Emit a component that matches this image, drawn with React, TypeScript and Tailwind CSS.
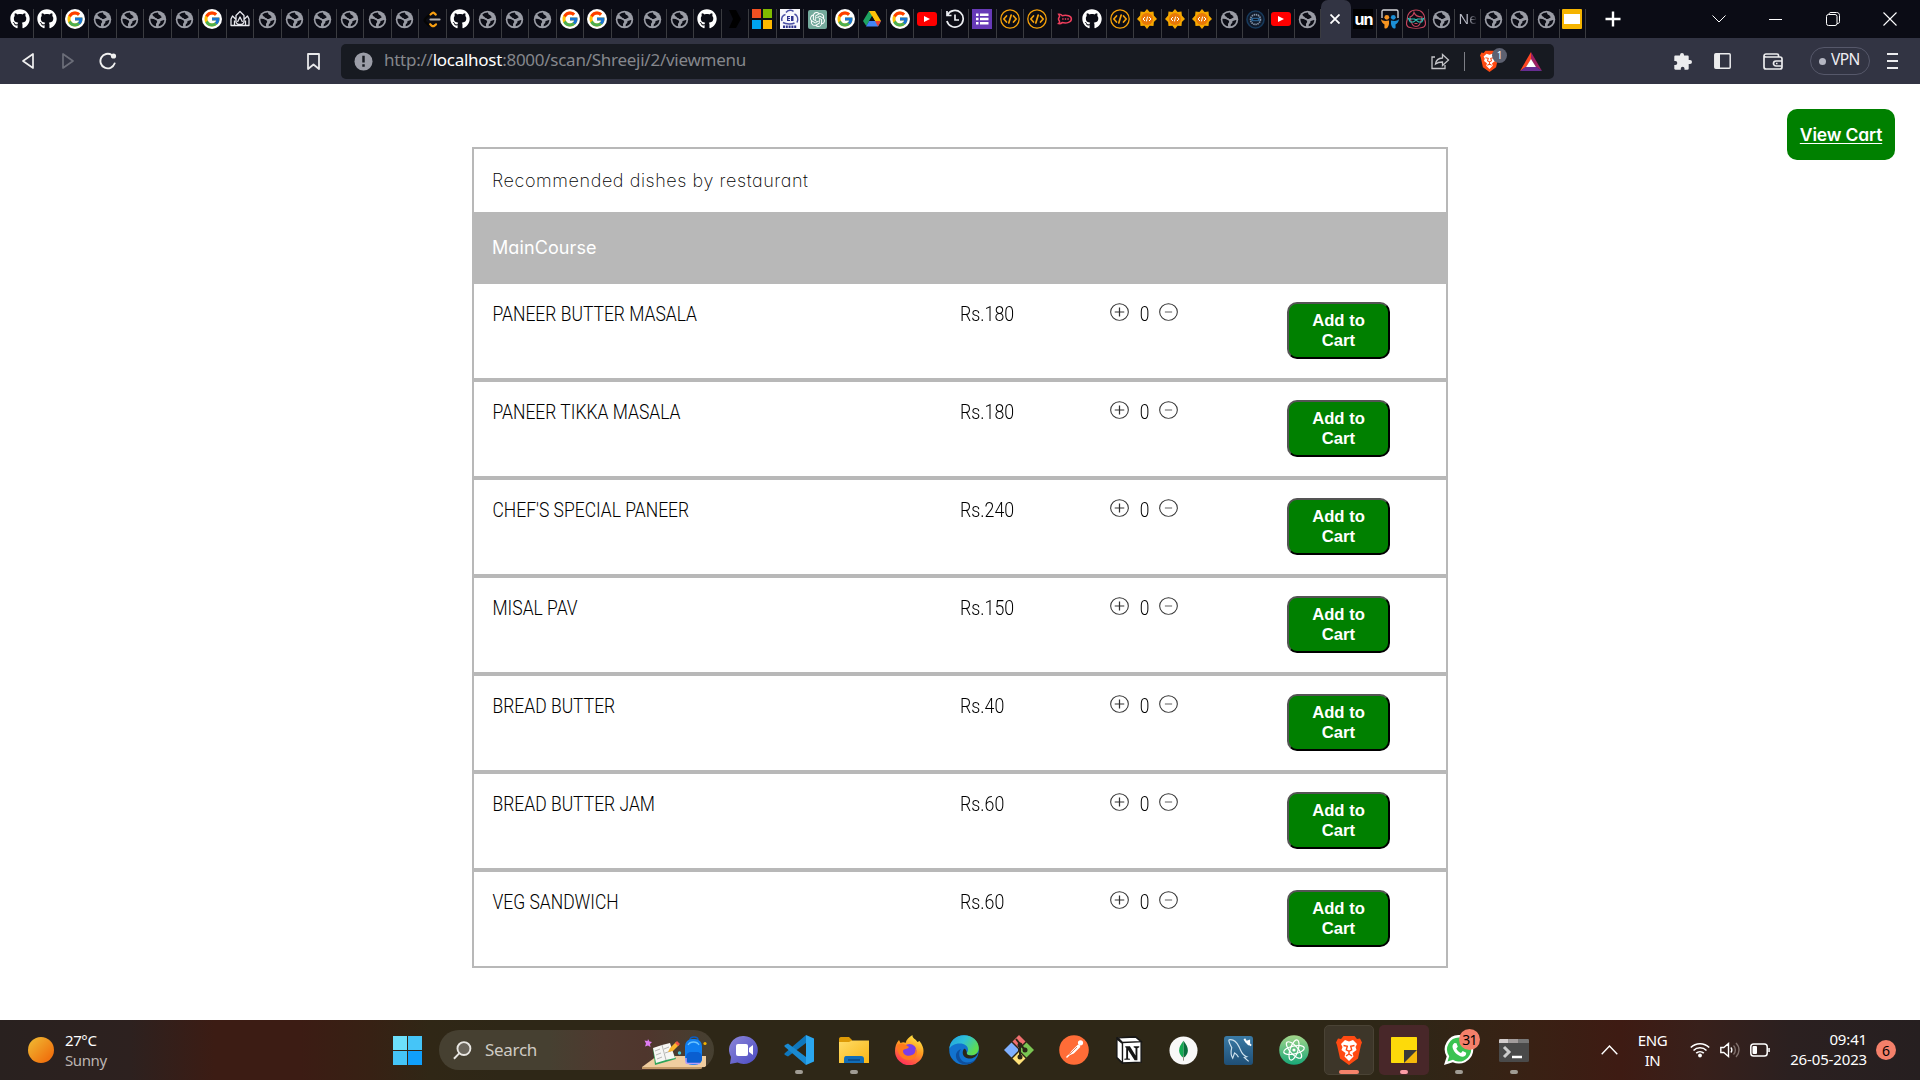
import React from "react";
import { FaGithub } from "react-icons/fa";
import { FcGoogle } from "react-icons/fc";
import { SiBrave, SiOpenai } from "react-icons/si";

type SvgProps = { className?: string };

const Globe = () => (
  <svg viewBox="0 0 20 20" className="size-[19px]">
    <circle cx="10" cy="10" r="9.200" fill="#9a9ca5" />
    <path d="M10.500 2.600C8.500 2.500 6 3.400 4.500 5L6 6.800c1.200.2 1.500 1.700 3 1.700.2 1.500 1.800 1 3 .7.5-1.200 2.500-.7 2.500-2.200-1.700 0-.8-1.500-2-1.700-1.300-.2-1.700-1.200-2-2.700z" fill="#0c0d16" />
    <path d="M2.600 9.300c2-.3 3.800.4 5.600 1.200 1.500.7 2 2.200.8 3.200-.8.700-.5 1.800-.5 3.400C5 16.700 2.300 13.500 2.600 9.300zM17.200 10.500c-1.700-.3-2.300 1.200-3.900 1-.7 1.200.2 2-1 2.600-1.200.6-1.100 1.800-1 3 3.200-.4 5.700-3 5.900-6.600z" fill="#0c0d16" />
  </svg>
);
const Google = () => (
  <span className="flex size-[20px] items-center justify-center rounded-full bg-white"><FcGoogle className="size-[18px]" /></span>
);
const Git = () => <FaGithub className="size-[20px] text-white" />;
const Code = () => (
  <svg viewBox="0 0 20 20" className="size-[20px]" fill="none" stroke="#f5a10b" strokeLinecap="round" strokeLinejoin="round">
    <circle cx="10" cy="10" r="9.200" strokeWidth="1.300" />
    <path d="M6.500 7 3.800 10l2.700 3M13.500 7l2.700 3-2.700 3M11.200 6 8.800 14" strokeWidth="1.700" />
  </svg>
);
const Sun = () => (
  <svg viewBox="0 0 20 20" className="size-[20px]">
    <path d="M10 0l2.600 3 3.900-.500.400 3.900L20 10l-3.100 3.100-.4 3.900-3.900-.2L10 20l-2.600-3.200-3.900.2-.4-3.900L0 10l3.100-3.600.4-3.900 3.900.500z" fill="#f5a800" />
    <circle cx="10" cy="10" r="6" fill="#e87808" />
    <path d="M8 8 6 10l2 2M12 8l2 2-2 2M10.600 7.600 9.400 12.400" fill="none" stroke="#fff" strokeWidth="1" />
  </svg>
);
const Crown = () => (
  <svg viewBox="0 0 20 20" className="size-[20px]" fill="none" stroke="#e8e8ee" strokeWidth="1.300" strokeLinejoin="round">
    <path d="M1 16.500h18V10l-1.500-3L14 10.500V6.500L10 2.500 6 6.500v4L2.500 7 1 10zM4.500 16.500v-5M15.500 16.500v-5M6 10.500v2a4 3 0 0 0 8 0v-2M7.500 13 10 8l2.500 5" />
  </svg>
);
const Leet = () => (
  <svg viewBox="0 0 20 20" className="size-[20px]" fill="none" strokeWidth="2.200" strokeLinecap="round">
    <path d="M9.500 3.800 3.500 9.500c-1 1-1 2.500 0 3.500l3.500 3.500" stroke="#050505" />
    <path d="m8.500 5.500 1.700-1.400c.7-.5 1.400-.5 2 0l1.600 1.500M8.200 15.200l1.500 1.400c.8.700 2 .7 2.800 0l1.500-1.300" stroke="#f79f12" />
    <path d="M8.500 10.500h9" stroke="#b5b3b2" />
  </svg>
);
const BlackArrow = () => (
  <svg viewBox="0 0 20 20" className="size-[20px]"><path d="M4 1h7l5 9-5 9H4l4-9z" fill="#000" /></svg>
);
const Microsoft = () => (
  <span className="grid size-[20px] grid-cols-2 gap-[2px]"><i className="bg-[#f25022]" /><i className="bg-[#7fba00]" /><i className="bg-[#00a4ef]" /><i className="bg-[#ffb900]" /></span>
);
const Institute = () => (
  <svg viewBox="0 0 20 20" className="size-[20px]">
    <path d="M0 0h20v20H0z" fill="#f7f7fc" />
    <path d="M6 3.500C8 1 12 .5 13.500 2.500M2 12C1 9 2.500 6 5.500 5.500M14.500 5c3 1.500 4 5 2.500 8.500M3 13.500c3 1.800 9 1.800 11.500.500" fill="none" stroke="#4a4fa5" strokeWidth="1.500" />
    <path d="M7 7h3v1H8.300v1H10v1H8.300v1H10v1H7zM11 7h2.500v5H11z" fill="#30348f" />
    <path d="M3 17.800h14" stroke="#30348f" strokeWidth="2.400" strokeDasharray="2 .8" />
  </svg>
);
const OpenAi = () => <span className="flex size-[19px] items-center justify-center rounded-[2px] bg-[#74aa9c]"><SiOpenai className="size-[15px] text-white" /></span>;
const Drive = () => (
  <svg viewBox="0 0 20 20" className="size-[20px]">
    <path d="M7 2h6L7.300 12 4.300 17 1 12z" fill="#1ea362" /><path d="M7 2h6l6 10h-6z" fill="#ffc107" /><path d="M7.200 12H19l-3 5.500H4z" fill="#4285f4" /><path d="M13 12h6l-3 5.500z" fill="#ea4335" /><path d="M10 7.200 7.200 12h5.600z" fill="#0c0d16" />
  </svg>
);
const Tube = () => (
  <span className="flex h-[14px] w-[20px] items-center justify-center rounded-[3px] bg-[#f00]"><svg viewBox="0 0 6 6" className="size-[6px]"><path d="M0 0l6 3-6 3z" fill="#fff" /></svg></span>
);
const History = () => (
  <svg viewBox="0 0 20 20" className="size-[20px]" fill="none" stroke="#eceef2" strokeWidth="1.700">
    <path d="M2 2v4.500h4.500M2.500 6a8.300 8.300 0 1 1-.6 6M10 5.500V11h4" />
  </svg>
);
const Forms = () => (
  <svg viewBox="0 0 20 20" className="size-[20px]"><path d="M0 0h20v20H0z" fill="#673ab7" /><path d="M4 4.500h2.500V7H4zM4 8.800h2.500v2.500H4zM4 13h2.500v2.500H4zM8 4.500h8.500V7H8zM8 8.800h8.500v2.500H8zM8 13h8.500v2.500H8z" fill="#fff" /></svg>
);
const Rocket = () => (
  <svg viewBox="0 0 20 20" className="size-[16px]" fill="none" stroke="#ef3e5c" strokeWidth="1.900">
    <path d="M2 4c2-.3 3.500.3 4.500 1.800 6-1.300 11.500.5 11.500 4.200s-5.500 6-11.500 4.500c-1 1-2.500 1.500-4.500 1.200 1-1 1.400-2 1-3.200-1.300-1.500-1.300-3.500 0-5 .4-1 0-2-1-3.500z" />
    <path d="M6.500 10h1.800M9.700 10h1.800M12.900 10h1.800" strokeWidth="2" />
  </svg>
);
const Seal = () => (
  <svg viewBox="0 0 20 20" className="size-[19px]">
    <circle cx="10" cy="10" r="9" fill="#101a2a" stroke="#173a5c" strokeWidth="1.600" /><circle cx="10" cy="10" r="5.200" fill="none" stroke="#8494a8" strokeWidth="1.800" strokeDasharray="1.500 .7" /><path d="M5.500 8.200h9v3.600h-9z" fill="#2e6696" /><path d="M7.500 10h5" stroke="#0c1420" strokeWidth="1.300" />
  </svg>
);
const Unstop = () => <span className="flex size-[20px] items-center justify-center bg-black pb-[1px] font-['Inter'] text-[16px] leading-none font-bold tracking-[-1px] text-white">un</span>;
const People = () => (
  <svg viewBox="0 0 20 20" className="size-[20px]">
    <path d="M2 9V2.500C2 1.500 2.500 1 3.500 1h13c1 0 1.500.5 1.500 1.500V9" fill="none" stroke="#d8d8dc" strokeWidth="1.300" />
    <circle cx="6.800" cy="8.300" r="2.400" fill="#f79421" /><circle cx="13.300" cy="8.300" r="2.400" fill="#1c8fd6" />
    <path d="M1 10c2 2.500 5 2 8 1.500V15c-.5 3-2 5-4 4.500-1-.5-.5-2-.5-4C2.500 14.500 1 12 1 10z" fill="#f79421" /><path d="M19 10c-2 2.500-5 2-8 1.500V15c.5 3 2 5 4 4.500 1-.5.500-2 .500-4 2-1 3.500-3.500 3.500-5.500z" fill="#1c8fd6" />
  </svg>
);
const Girl = () => (
  <svg viewBox="0 0 20 20" className="size-[20px]" fill="none" stroke="#c4455c" strokeWidth="1.200">
    <path d="M4 18.500C0 18 0 14 1.300 10.500 1 5 4.500 1 10 1s9 4 8.700 9.500C20 14 20 18 16 18.500M4 8c1 6 3 9.500 6 9.500s5-3.500 6-9.500C12 8 9 6 8 3.500 7.500 6 6 7.500 4 8zM4 18.500c3 1 9 1 12 0M8.500 14.500h3" />
    <path d="M2.500 9.500 4 10h4.500l1.500 1 1.500-1H16l1.500-.5-1.800 3.300-3.200.2-2.500-2-2.500 2-3.200-.2z" stroke="#2fc0b5" strokeWidth="1.200" />
  </svg>
);
const Ne = () => <span className="font-['Noto_Sans'] text-[14px] leading-none text-[#b9bbc6] [mask-image:linear-gradient(to_right,#000_50%,transparent_100%)]">Ne</span>;
const Slides = () => <span className="flex size-[20px] items-center justify-center rounded-[1px] bg-[#f5b400]"><i className="h-[10px] w-[16px] bg-white" /></span>;

const icons: Record<string, () => React.ReactElement> = {
  g: Globe, G: Google, h: Git, c: Code, s: Sun, k: Crown, l: Leet, b: BlackArrow, m: Microsoft, i: Institute, o: OpenAi, d: Drive, y: Tube, t: History, f: Forms, r: Rocket, e: Seal, u: Unstop, p: People, w: Girl, n: Ne, v: Slides,
};
const wideTabs = "hhGggggGkgggggglhgggGGggghbmioGdGytfccrhcsss".split("");
const midTabs = "geyg".split("");
const lastTabs = "upwgngggv".split("");

function Tab({ id, narrow }: { id: string; narrow?: boolean }) {
  const Icon = icons[id];
  return (
    <div className={narrow ? "flex h-[29px] w-[26.1px] shrink-0 justify-center border-r border-[#3a3b40]" : "flex h-[29px] w-[27.5px] shrink-0 justify-center border-r border-[#3a3b40]"}>
      <div className="flex h-[20px] items-center"><Icon /></div>
    </div>
  );
}

function TabStrip() {
  return (
    <div className="flex h-[38px] items-end bg-[#0b0c15] pl-[6.5px]">
      {wideTabs.map((t, i) => <Tab key={i} id={t} />)}
      {midTabs.map((t, i) => <Tab key={i} id={t} narrow />)}
      <div className="flex h-[38px] w-[30px] shrink-0 items-center justify-center rounded-t-[7px] bg-[#323443]">
        <svg viewBox="0 0 10 10" className="size-[10px] -translate-x-px" stroke="#fff" strokeWidth="1.800"><path d="M.5.500l9 9M9.500.500l-9 9" /></svg>
      </div>
      {lastTabs.map((t, i) => <Tab key={i} id={t} narrow />)}
      <div className="flex h-[38px] flex-1 items-center text-white">
        <svg viewBox="0 0 16 16" className="ml-[19.500px] size-[16px]" stroke="#fff" strokeWidth="2.400"><path d="M8 .500v15M.500 8h15" /></svg>
        <svg viewBox="0 0 14 8" className="ml-[91px] h-[8px] w-[14px]" fill="none" stroke="#fff" strokeWidth="1"><path d="M.5.500 7 7l6.500-6.500" /></svg>
        <i className="ml-[43px] h-px w-[13px] bg-white" />
        <svg viewBox="0 0 14 14" className="ml-[44px] size-[14px]" fill="none" stroke="#fff" strokeWidth="1"><rect x=".5" y="2.500" width="10.500" height="11" rx="2" /><path d="M3 2.500C3 1.200 3.500.500 5 .500h5.500c2 0 3 1 3 3v6c0 1.500-.7 2-2.500 2" /></svg>
        <svg viewBox="0 0 14 14" className="ml-[43px] size-[14px]" stroke="#fff" strokeWidth="1.100"><path d="M.5.500l13 13M13.500.500l-13 13" /></svg>
      </div>
    </div>
  );
}

const BatLogo = () => (
  <svg viewBox="0 0 22 19" className="h-[19px] w-[22px]"><path d="M11 0v7.500L6 15l-6 4z" fill="#ff4724" /><path d="M11 0l11 19-6-4-5-7.500z" fill="#9e1f63" /><path d="M0 19l5.500-4h11l5.500 4z" fill="#662d91" /><path d="M11 7l5 8H6z" fill="#fff" /></svg>
);

const BraveLion = ({ className }: SvgProps) => (
  <svg viewBox="0 0 26 30" className={className}><path d="M7.500 1h11l2.500 3 3-.500 2 4-1 2.500-3 13.500-9 6.500-9-6.500L1 10 0 7.500l2-4 3 .500z" fill="#ff4a12" /><path d="M13 6.500 17 5l4 4-1.500 3 1 3-4 3 1 3.500L13 26l-4.500-4.500 1-3.500-4-3 1-3L5 9l4-4z" fill="#fff" /><path d="M7.500 10.500l3.800.800-1 3.500 2.700 1.500 2.700-1.500-1-3.500 3.800-.8M13 16.500v2.500l-3 2M13 19l3 2" fill="none" stroke="#ff4a12" strokeWidth="1.400" /></svg>
);

function Toolbar() {
  return (
    <div className="flex h-[46px] items-center bg-[#323443]">
      <svg viewBox="0 0 12 16" className="ml-[22px] h-[16px] w-[12px]" fill="none" stroke="#f0f0f0" strokeWidth="1.700" strokeLinejoin="round"><path d="M11 1v14L1 8z" /></svg>
      <svg viewBox="0 0 12 16" className="ml-[28px] h-[16px] w-[12px]" fill="none" stroke="#6c6e79" strokeWidth="1.700" strokeLinejoin="round"><path d="M1 1v14L11 8z" /></svg>
      <svg viewBox="0 0 18 18" className="ml-[25px] size-[18px]" fill="none" stroke="#f0f0f0" strokeWidth="1.900"><path d="M12.800 3A7.300 7.300 0 1 0 15.600 11.500" strokeLinecap="round" /><circle cx="14.500" cy="4" r="2.600" fill="#f0f0f0" stroke="none" /></svg>
      <svg viewBox="0 0 13 17" className="ml-[190px] h-[17px] w-[13px]" fill="none" stroke="#e8e8ea" strokeWidth="1.800" strokeLinejoin="round"><path d="M1 1h11v15l-5.500-4.500L1 16z" /></svg>
      <div className="ml-[21px] flex h-[35px] w-[1213px] items-center rounded-[5px] bg-[#171a21]">
        <svg viewBox="0 0 20 20" className="ml-[13px] size-[19px]"><circle cx="10" cy="10" r="9.500" fill="#9b9da7" /><path d="M8.700 4h2.600v7H8.700zM8.700 12.800h2.600v2.600H8.700z" fill="#171a21" /></svg>
        <span className="ml-[11px] w-[1047px] -translate-y-px font-['Noto_Sans'] text-[17px] leading-[22px] tracking-[-0.260px] whitespace-nowrap text-[#85878c]">http://<span className="text-white">localhost</span>:8000/scan/Shreeji/2/viewmenu</span>
        <svg viewBox="0 0 19 18" className="h-[18px] w-[19px]" fill="none" stroke="#c3c4c8" strokeWidth="1.300"><path d="M4 5H1v11.500h13V13" /><path d="M4.500 12C5 8 7.500 6.200 11.500 6V2.500L17.500 8l-6 5.500V10C8.500 10 6.500 10.300 4.500 12z" /></svg>
        <i className="ml-[14px] h-[19px] w-px bg-[#7d7f86]" />
        <div className="relative ml-[15px] flex size-[22px] items-center">
          <BraveLion className="h-[22px] w-[19px]" />
          <span className="absolute -top-[2px] left-[12px] flex size-[15px] items-center justify-center rounded-full bg-[#5d6170] font-['Noto_Sans'] text-[10px] text-white">1</span>
        </div>
        <span className="ml-[18px]"><BatLogo /></span>
      </div>
      <svg viewBox="0 0 18 18" className="ml-[120px] size-[18px]" fill="#ececee"><path d="M6 3a2 2 0 0 1 4 0v.500h3.500c.8 0 1.200.5 1.200 1.200V8H16a2 2 0 0 1 0 4h-1.300v4.500c0 .8-.5 1.200-1.200 1.200h-3V16.500a1.800 1.800 0 0 0-3.700 0v1.200H1.500c-.8 0-1.200-.5-1.200-1.200V13h1a2 2 0 0 0 0-4h-1V4.700c0-.8.500-1.200 1.200-1.200H6z" /></svg>
      <svg viewBox="0 0 17 16" className="ml-[22px] h-[16px] w-[17px]"><rect x=".8" y=".8" width="15.400" height="14.400" rx="1" fill="none" stroke="#ececee" strokeWidth="1.500" /><path d="M1 1h5v14H1z" fill="#ececee" /></svg>
      <svg viewBox="0 0 20 17" className="ml-[32px] h-[17px] w-[20px]" fill="none" stroke="#ececee" strokeWidth="1.700"><path d="M15.500 4V2.500C15.500 1.500 15 1 14 1H3a2 2 0 0 0-2 2v11a2 2 0 0 0 2 2h14a2 2 0 0 0 2-2V6a2 2 0 0 0-2-2H3a2 2 0 0 1-2-1.500M19 8h-6a2.500 2.500 0 0 0 0 5h6M13 10.500h1.500" /></svg>
      <div className="ml-[27px] flex h-[28px] w-[60px] items-center rounded-full border border-[#56586a] pl-[8px]">
        <i className="size-[7px] rounded-full bg-[#b4b6c2]" />
        <span className="ml-[5px] -translate-y-px font-['Noto_Sans'] text-[15.500px] leading-none tracking-[-0.600px] text-[#eeeef2]">VPN</span>
      </div>
      <div className="ml-[17px] flex w-[11px] flex-col gap-[5px]"><i className="h-[2px] bg-[#ececee]" /><i className="h-[2px] bg-[#ececee]" /><i className="h-[2px] bg-[#ececee]" /></div>
    </div>
  );
}

const dishes = [
  ["PANEER BUTTER MASALA", "Rs.180"],
  ["PANEER TIKKA MASALA", "Rs.180"],
  ["CHEF'S SPECIAL PANEER", "Rs.240"],
  ["MISAL PAV", "Rs.150"],
  ["BREAD BUTTER", "Rs.40"],
  ["BREAD BUTTER JAM", "Rs.60"],
  ["VEG SANDWICH", "Rs.60"],
];

const Circle = ({ plus }: { plus?: boolean }) => (
  <svg viewBox="0 0 20 20" className="h-[18px] w-[19px]" fill="none" stroke="#333" strokeWidth="1.100" preserveAspectRatio="none">
    <circle cx="10" cy="10" r="9.300" />
    {plus ? <path d="M5 10h10M10 5v10" strokeWidth="1.300" /> : <path d="M6.200 10h7.600" stroke="#777" strokeWidth="1.300" />}
  </svg>
);

function Dish({ name, price }: { name: string; price: string }) {
  return (
    <div className="flex h-[98px] items-start border-2 border-[#b8b8b8] pt-[18px] pl-[18px] font-['Roboto'] text-[20px] leading-[24px] font-light text-black">
      <div className="w-[468px] whitespace-nowrap"><span className="inline-block origin-left translate-x-[0.500px] scale-x-[0.874]">{name}</span></div>
      <div className="w-[150px] whitespace-nowrap"><span className="inline-block origin-left scale-x-[0.890]">{price}</span></div>
      <div className="flex w-[177px] items-start">
        <span className="mt-[1px]"><Circle plus /></span>
        <span className="w-[30px] pl-[2px] text-center"><span className="inline-block scale-x-[0.870]">0</span></span>
        <span className="mt-[1px]"><Circle /></span>
      </div>
      <button className="h-[57px] w-[103px] rounded-[10px] border-2 border-black bg-[#008000] px-[15px] font-['Liberation_Sans'] text-[16.670px] leading-[20px] font-bold text-white [border-style:outset]">Add to Cart</button>
    </div>
  );
}

function Page() {
  return (
    <main className="relative h-[936px] bg-white pt-[63px]">
      <a className="absolute top-[25px] right-[25px] flex h-[51px] w-[108px] items-center justify-center rounded-[10px] bg-[#008000] pt-[2px] font-['Inter'] text-[17.500px] font-semibold tracking-[-0.150px] whitespace-nowrap text-white underline decoration-1 underline-offset-2 [font-feature-settings:'cv11']">View Cart</a>
      <section className="mx-auto w-[976px] font-['Inter'] text-[18px] [font-feature-settings:'cv11']">
        <div className="flex h-[67px] items-center border-2 border-[#b8b8b8] pb-px pl-[18px] font-extralight text-black"><span className="tracking-[0.580px]">Recommended dishes by restaurant</span></div>
        <div className="flex h-[68px] items-center bg-[#b8b8b8] pb-px pl-[20px] tracking-[0.100px] text-white">MainCourse</div>
        {dishes.map(([n, p]) => <Dish key={n} name={n} price={p} />)}
      </section>
    </main>
  );
}

const Chat = () => (
  <svg viewBox="0 0 30 30" className="size-[30px]"><defs><linearGradient id="chat" x1="0" y1="0" x2="1" y2="1"><stop stopColor="#8c86d8" /><stop offset="1" stopColor="#4b4bc4" /></linearGradient></defs><path d="M15 1a14 14 0 1 1-6.500 26.500L1 29l1-7A14 14 0 0 1 15 1z" fill="url(#chat)" /><rect x="7" y="9" width="12" height="12" rx="2" fill="#fff" /><path d="M20 13l4-3v10l-4-3z" fill="#fff" /></svg>
);
const VsCode = () => (
  <svg viewBox="0 0 30 30" className="size-[30px]"><path d="M22 0v8L4 21.500 1 20c-.8-.6-.8-1.500 0-2z" fill="#0f77bd" /><path d="M22 30v-8L4 8.500 1 10c-.8.600-.8 1.500 0 2z" fill="#1a8ad2" /><path d="M22 0l8 3.500v23L22 30z" fill="#2aa6f0" /></svg>
);
const Folder = () => (
  <svg viewBox="0 0 30 30" className="size-[30px]"><defs><linearGradient id="fold" x1="0" y1="0" x2="1" y2="1"><stop stopColor="#ffdc66" /><stop offset="1" stopColor="#f9b616" /></linearGradient></defs><path d="M0 4c0-1 .5-2 2-2h8l3 3v5H0z" fill="#dd9a06" /><path d="M0 7h10l3-1.500h17V28H0z" fill="url(#fold)" /><path d="M5 28v-4c0-2.500 1-3 3-3h14c2 0 3 1 3 3v4z" fill="#116db8" /><path d="M9 25h12" stroke="#0a4680" strokeWidth="1.500" /></svg>
);
const Firefox = () => (
  <svg viewBox="0 0 30 30" className="size-[30px]"><defs><linearGradient id="fox" x1=".8" y1="0" x2=".3" y2="1"><stop stopColor="#fff04a" /><stop offset=".45" stopColor="#ff9a20" /><stop offset="1" stopColor="#ff2b5c" /></linearGradient></defs><path d="M5 5l1.500 3c2-1 4-1 5 0 1-4 4-6 7-8-.5 3 3 4 5 7l2-1c3 4 4 7 4 10a14 14 0 0 1-28.500 0C1 12 2 8 5 5z" fill="url(#fox)" /><circle cx="15.500" cy="16" r="7" fill="#7a3ee8" /><path d="M3 10c3-2 6-2 9 0l3 2c-2 3-5 1-6 4 0 4 5 6 9 4 3-1 4-4 3-7 4 5 1 12-6 12S3 19 3 10z" fill="#ff7a1e" /></svg>
);
const Edge = () => (
  <svg viewBox="0 0 30 30" className="size-[30px]"><defs><linearGradient id="edg" x1="0" y1="0" x2="1" y2=".5"><stop stopColor="#1f9fe0" /><stop offset=".5" stopColor="#2fc0d8" /><stop offset="1" stopColor="#5fdc4e" /></linearGradient></defs><circle cx="15" cy="15" r="14.800" fill="#1273cf" /><path d="M.3 14C1 5.500 7 .200 15 .200c8.500 0 14.800 5.800 14.800 12.800 0 5-4 7.500-7.500 7.500-3 0-5-1-4.500-2.500.5-1 1.200-1.500 1.200-3.500C19 11 15.500 8.500 11 8.500 5 8.500 1.500 11 .3 14z" fill="url(#edg)" /><path d="M12 14c-4 5-1 13 6 13.500 4 0 7-1.500 9.500-4C22 33 8 30 7 22c-.5-4 2-7 5-8z" fill="#0e4f9e" /><path d="M17.800 18c-.5 1.500 1.500 2.500 4.500 2.500 2.500 0 5-1 6.500-3-.5 4-5 6.500-9.500 6-5-.5-7-6-4.500-9.500 1-1 3 1 3 4z" fill="#2b2617" /></svg>
);
const GitTool = () => (
  <svg viewBox="0 0 30 30" className="size-[30px]"><path d="M15 0l6.500 6.500L15 13 8.500 6.500z" fill="#f07070" /><path d="M7.500 7.500 14 14v2l-6.500 6.500L0 15z" fill="#7fb0ff" /><path d="M22.500 7.500 30 15l-7.500 7.500L16 16v-2z" fill="#7ac653" /><path d="M15 17l6.500 6.500L15 30l-6.500-6.500z" fill="#ffe27a" /><path d="M12 4l4 5v14M16 9l5 6" stroke="#2b2617" strokeWidth="2" fill="none" /><circle cx="16" cy="10" r="2.500" fill="#2b2617" /><circle cx="21" cy="15" r="2.500" fill="#2b2617" /><circle cx="16" cy="22" r="2.500" fill="#2b2617" /></svg>
);
const Postman = () => (
  <svg viewBox="0 0 30 30" className="size-[30px]"><circle cx="15" cy="15" r="14.800" fill="#ff6c37" /><path d="M9 21l3.500-5 6-6 2-.5.800 2.500-6.500 6.500z" fill="#fff" /><circle cx="21.500" cy="7.800" r="2.600" fill="#fff" /><path d="M7.500 22.500 10 20" stroke="#fff" strokeWidth="1.500" /><path d="M10.500 19.500 18 12" stroke="#e08a68" strokeWidth="1" /></svg>
);
const Notion = () => (
  <svg viewBox="0 0 30 30" className="size-[28px]"><path d="M3 2 22 1l6 5v22l-20 1-6-6z" fill="#fff" stroke="#161616" strokeWidth="1.500" /><path d="M2 3l6 5v21l-6-6zM3 2 22 1l6 5-20 1z" fill="#fff" stroke="#161616" strokeWidth="1.500" /><path d="M11 11h5l6 10v-8l-2-1v-1h6v1l-2 1v13h-3l-7-11v9l2 .500v1h-6v-1l2-.500V12.500l-1-.500z" fill="#161616" /></svg>
);
const Mongo = () => (
  <svg viewBox="0 0 30 30" className="size-[29px]"><circle cx="15" cy="15" r="14.500" fill="#f8f8f8" /><path d="M15 5c-3 4-4.500 6.500-4.500 10s2.500 6.500 4.500 7.500z" fill="#13aa52" /><path d="M15 5c3 4 4.500 6.500 4.500 10s-2.500 6.500-4.500 7.500z" fill="#0a6e3c" /><path d="M15 20v5.500" stroke="#8c8c7a" strokeWidth="1" /></svg>
);
const MySql = () => (
  <svg viewBox="0 0 30 30" className="size-[29px]"><defs><linearGradient id="sql" x1="0" y1="0" x2="0" y2="1"><stop stopColor="#3a7aa5" /><stop offset="1" stopColor="#1f4f76" /></linearGradient></defs><rect width="30" height="30" rx="3" fill="url(#sql)" /><path d="M5 4c4-1 8 2 10.500 7s2.500 8.500 8 10.500l-2.500.8 4.500 4M5 4c0 3 1.500 5.500 3 8-1 4-1 8 1 11l2-5.500c2 1 3 2.500 4 4.500" fill="none" stroke="#cfe2ee" strokeWidth="1.200" /><path d="M21 3l2 3 3-1v3l2 2M23 6l3 3" stroke="#fff" strokeWidth="2" fill="none" /></svg>
);
const Atom = () => (
  <svg viewBox="0 0 30 30" className="size-[30px]"><defs><linearGradient id="atm" x1="0" y1="0" x2="0" y2="1"><stop stopColor="#a3d58a" /><stop offset="1" stopColor="#18a878" /></linearGradient></defs><circle cx="15" cy="15" r="14.800" fill="url(#atm)" /><g fill="none" stroke="#fff" strokeWidth="1.200"><ellipse cx="15" cy="15" rx="10.500" ry="4" transform="rotate(-12 15 15)" /><ellipse cx="15" cy="15" rx="10.500" ry="4" transform="rotate(48 15 15)" /><ellipse cx="15" cy="15" rx="10.500" ry="4" transform="rotate(108 15 15)" /></g><circle cx="15" cy="15" r="1.600" fill="#fff" /></svg>
);
const Sticky = () => (
  <svg viewBox="0 0 26 26" className="size-[26px]"><path d="M0 1c0-.6.400-1 1-1h24c.6 0 1 .4 1 1v12L13 26H1c-.6 0-1-.4-1-1z" fill="#fdda0a" /><path d="M13 13h13v12c0 .6-.4 1-1 1H13z" fill="#f5b90c" /><path d="M13 13h13L13 26z" fill="#3a3a38" /></svg>
);
const Whats = () => (
  <svg viewBox="0 0 30 30" className="size-[30px]"><path d="M15.500 0a14.300 14.300 0 1 1-6.700 27.200L0 30l2.700-8.500A14.300 14.300 0 0 1 15.500 0z" fill="#fff" /><path d="M15.500 2.500A12 12 0 1 1 9 24.800L3.500 26.500l1.700-5.200A12 12 0 0 1 15.500 2.500z" fill="#3ac351" /><path d="M10.500 8l2 .3 1.300 3.500-1.500 1.700c1 2 2.500 3.500 4.700 4.500l1.700-2 3.500 1.700c.2 2.500-1.500 4-4 4-5-1-9.500-6-9.700-10 0-1.500.8-3 2-3.700z" fill="#fff" /></svg>
);
const Terminal = () => (
  <svg viewBox="0 0 30 23" className="h-[23px] w-[30px]"><rect width="30" height="23" rx="1.500" fill="#4a4a4a" /><path d="M1.500 0h8v4H0V1.500C0 .5.500 0 1.500 0z" fill="#d2cccc" /><path d="M9.500 0h10v4h-10z" fill="#a29c9c" /><path d="M19.500 0h9c1 0 1.500.5 1.500 1.500V4H19.500z" fill="#777" /><path d="M5 8l5 5-5 5" fill="none" stroke="#ccc" strokeWidth="3" /><path d="M13 18h10" stroke="#fff" strokeWidth="2.500" /></svg>
);
const Brave = () => <BraveLion className="h-[30px] w-[26px]" />;

const apps: { Icon: React.FC; dot?: boolean; kind?: "active" | "alert" | "badge" }[] = [
  { Icon: Chat }, { Icon: VsCode, dot: true }, { Icon: Folder, dot: true }, { Icon: Firefox }, { Icon: Edge }, { Icon: GitTool }, { Icon: Postman }, { Icon: Notion }, { Icon: Mongo }, { Icon: MySql }, { Icon: Atom },
  { Icon: Brave, kind: "active" }, { Icon: Sticky, kind: "alert" }, { Icon: Whats, dot: true, kind: "badge" }, { Icon: Terminal, dot: true },
];

function StudyArt() {
  return (
    <svg viewBox="0 0 64 39" className="h-[39px] w-[72px] shrink-0" preserveAspectRatio="xMinYMin meet">
      <path d="M0 36 15 25h49v11z" fill="#f0cda0" /><path d="M0 36h60v2H0z" fill="#c49a68" />
      <path d="M6 8l1.500 2.500L10 11l-2 2 .500 3-2.500-1.500L3 15.500l1-3L2.500 9.500l3 .500z" fill="#dd7cf0" />
      <path d="M11 17l2 17 21-6-2-4z" fill="#2ea45a" /><path d="M11 17l9-3 8-2 5 15-9 2-10 3z" fill="#f6f6f4" /><path d="M20 14l4 15M13 20l5-2M14 24l5-2M15 28l5-2M22 18l5-2M23 22l6-2" stroke="#9a9a98" strokeWidth=".7" />
      <path d="M26 21l2-4 6-6 3 3-6 6z" fill="#fbb62e" /><path d="M33 12l2-2 3 3-2 2z" fill="#f05545" />
      <circle cx="37.500" cy="22" r="1.700" fill="#4cc6d6" /><circle cx="63" cy="12.500" r="1.600" fill="#f2b200" />
      <path d="M48 9c0-4 8-4 8 0" stroke="#0c5cc0" strokeWidth="1.500" fill="none" /><rect x="43" y="8" width="17" height="26" rx="7" fill="#0f7df0" /><rect x="44" y="21" width="16" height="12" rx="5" fill="#0a5ed0" /><path d="M46 14c2-4 9-4 11 0" stroke="#6cc4ff" strokeWidth="1.300" fill="none" /><path d="M44 27v4c0 1 1 1.500 2 1.500h12" stroke="#b79cf5" strokeWidth="1.500" fill="none" />
    </svg>
  );
}

function Taskbar() {
  return (
    <footer className="flex h-[60px] items-center bg-[linear-gradient(to_right,#29211f_0px,#2d211f_130px,#3c1c14_215px,#3c1c14_300px,#372114_370px,#302716_430px,#2e2717_500px,#2e2717_1400px,#392114_1530px,#3e1b13_1620px,#38201b_1700px,#2b2020_1790px,#261f20_1920px)] font-['Noto_Sans'] text-white">
      <div className="flex w-[393px] items-center">
        <span className="ml-[28px] size-[26px] rounded-full bg-[linear-gradient(135deg,#f0b530_10%,#f0740f_80%)]" />
        <div className="ml-[11px] flex flex-col text-[15px] leading-[20px] tracking-[-0.400px]"><span>27°C</span><span className="text-[#bcb5b2]">Sunny</span></div>
      </div>
      <div className="grid size-[29px] grid-cols-2 gap-px"><i className="bg-[#6de0fb]" /><i className="bg-[#45c5f8]" /><i className="bg-[#45c5f8]" /><i className="bg-[#109ffb]" /></div>
      <div className="ml-[17px] flex h-[40px] w-[275px] items-center overflow-hidden rounded-full bg-[linear-gradient(to_right,#464031_0%,#464031_40%,#4f392f_60%,#4f362d_75%,#464031_100%)]">
        <svg viewBox="0 0 20 20" className="ml-[14px] size-[19px]" fill="none" stroke="#e8e6e2" strokeWidth="2"><circle cx="11.500" cy="8" r="6.800" fill="#6b665c" /><path d="M6.500 13 1 18.700" /></svg>
        <span className="ml-[13px] w-[157px] text-[17px] tracking-[-0.300px] text-[#cfcbc4]">Search</span>
        <StudyArt />
      </div>
      <div className="ml-[2px] flex h-full">
        {apps.map(({ Icon, dot, kind }, i) => (
          <div key={i} className="relative flex w-[55px] items-center justify-center">
            <div className={kind === "active" ? "flex h-[50px] w-[50px] items-center justify-center rounded-[5px] border border-[#4a4335] bg-[#3d3629]" : kind === "alert" ? "flex h-[50px] w-[50px] items-center justify-center rounded-[5px] bg-[#482729]" : "flex h-[50px] w-[50px] items-center justify-center"}><Icon /></div>
            {dot && <i className="absolute bottom-[6px] h-[4px] w-[8px] rounded-full bg-[#a09c94]" />}
            {kind === "active" && <i className="absolute bottom-[6px] h-[4px] w-[20px] rounded-full bg-[#f5836b]" />}
            {kind === "alert" && <i className="absolute bottom-[6px] h-[4px] w-[8px] rounded-full bg-[#fb9ba5]" />}
            {kind === "badge" && <span className="absolute top-[9px] left-[28px] flex size-[21px] items-center justify-center rounded-full bg-[#f4806a] text-[14px] tracking-[-0.800px] text-black">31</span>}
          </div>
        ))}
      </div>
      <svg viewBox="0 0 17 10" className="ml-[60px] h-[10px] w-[17px]" fill="none" stroke="#fff" strokeWidth="1.400"><path d="M.7 9.300 8.500 1l7.800 8.300" /></svg>
      <div className="ml-[19px] flex w-[31px] flex-col items-center text-[15px] leading-[20px] tracking-[-0.400px]"><span>ENG</span><span>IN</span></div>
      <svg viewBox="0 0 20 16" className="ml-[22px] h-[16px] w-[20px]" fill="none" stroke="#fff" strokeWidth="1.600"><path d="M.8 5.500a13 13 0 0 1 18.400 0M3.500 8.500a9.200 9.200 0 0 1 13 0M6.200 11.200a5.500 5.500 0 0 1 7.600 0" /><circle cx="10" cy="13.500" r="1.900" fill="#fff" stroke="none" /></svg>
      <svg viewBox="0 0 20 16" className="ml-[10px] h-[16px] w-[20px]" fill="none" stroke="#fff" strokeWidth="1.400"><path d="M.8 5.500h3L8.500 1.500v13L3.800 10.500h-3zM10.800 5.500c1.400 1.300 1.400 3.700 0 5" /><path d="M13.500 3.500c2.500 2.500 2.500 6.500 0 9M16 1c4 4 4 10 0 14" stroke="#80706c" /></svg>
      <svg viewBox="0 0 20 14" className="ml-[10px] h-[14px] w-[20px]"><rect x=".8" y="1" width="16.400" height="12" rx="2.800" fill="none" stroke="#fff" strokeWidth="1.500" /><rect x="2.500" y="3" width="4.500" height="8" rx="1" fill="#fff" /><path d="M18.300 5h1.500v4h-1.500z" fill="#fff" /></svg>
      <div className="ml-[7px] flex w-[90px] -translate-y-px flex-col items-end text-[15px] leading-[20px] tracking-[-0.150px]"><span>09:41</span><span>26-05-2023</span></div>
      <span className="ml-[9px] flex size-[20px] items-center justify-center rounded-full bg-[#f4806a] text-[14px] text-black">6</span>
    </footer>
  );
}

export default function App() {
  return (
    <div className="h-[1080px] w-[1920px] overflow-hidden bg-white">
      <TabStrip />
      <Toolbar />
      <Page />
      <Taskbar />
    </div>
  );
}
